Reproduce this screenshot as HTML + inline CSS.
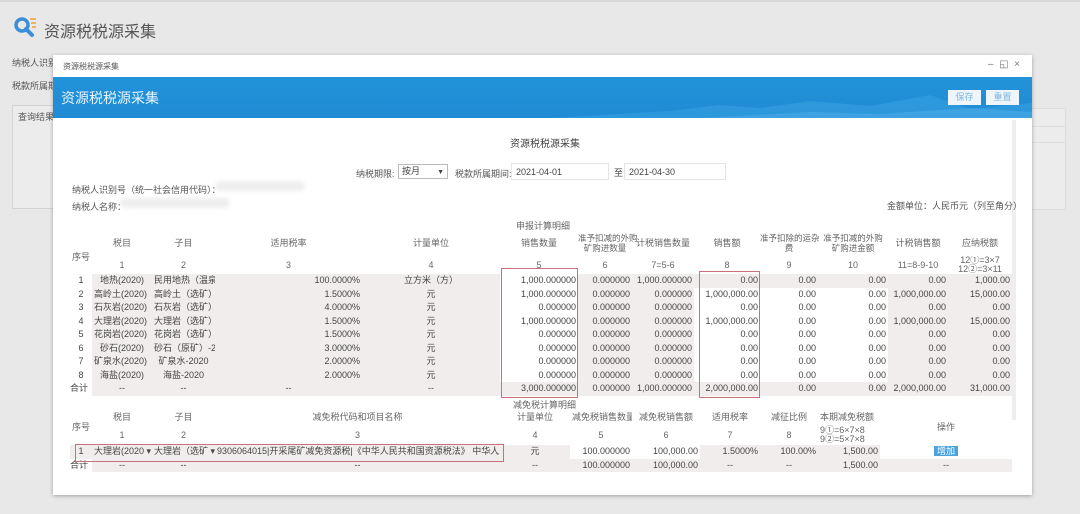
<!DOCTYPE html>
<html><head><meta charset="utf-8"><style>
*{margin:0;padding:0;box-sizing:border-box}
body{width:1080px;height:514px;background:#e8e8e8;font-family:"Liberation Sans","Noto Sans CJK SC",sans-serif;color:#444;position:relative;overflow:hidden;font-size:9px}
.a{position:absolute;white-space:nowrap}
table{border-collapse:collapse;table-layout:fixed;position:absolute}
td{font-size:9px;height:13.5px;line-height:11px;padding:0 2px;white-space:nowrap;overflow:hidden;color:#444}
.r{text-align:right}.c{text-align:center}
tr.g td{background:#f1eded}
td.w{background:#fff!important}
.hd td{color:#666;text-align:center}
td.m{line-height:10px;font-size:8.5px;overflow:visible;padding:0}
</style></head><body>
<div class="a" style="left:0;top:0;width:1080px;height:2px;background:#d8d8d8"></div>
<svg class="a" style="left:13px;top:15px" width="26" height="26" viewBox="0 0 26 26"><circle cx="9" cy="10" r="6" fill="none" stroke="#3a8fd8" stroke-width="3.5"/><path d="M13 14l6 6" stroke="#3a8fd8" stroke-width="4" stroke-linecap="round"/><path d="M17 4h6M18 8h5M19 12h4" stroke="#f0a030" stroke-width="1.6"/></svg>
<div class="a" style="left:44px;top:18px;font-size:16px;color:#555">资源税税源采集</div>
<div class="a" style="left:12px;top:56px;color:#555">纳税人识别</div>
<div class="a" style="left:12px;top:79px;color:#555">税款所属期</div>
<div class="a" style="left:12px;top:105px;width:60px;height:104px;border:1px solid #d4d4d4;background:#ececec"></div>
<div class="a" style="left:18px;top:110px;color:#555">查询结果</div>
<div class="a" style="left:1030px;top:108px;width:36px;height:102px;background:#ececec;border:1px solid #ddd"></div>
<div class="a" style="left:1030px;top:126px;width:36px;height:1px;background:#ddd"></div>
<div class="a" style="left:1030px;top:142px;width:36px;height:1px;background:#ddd"></div>
<div class="a" style="left:53px;top:55px;width:979px;height:440px;background:#fff;box-shadow:0 1px 4px rgba(0,0,0,.3)"></div>
<div class="a" style="left:63px;top:61px;font-size:8px;color:#555">资源税税源采集</div>
<div class="a" style="left:988px;top:59px;font-size:10px;color:#777">–&nbsp;&nbsp;◱&nbsp;&nbsp;×</div>
<div class="a" style="left:53px;top:77px;width:979px;height:41px;background:linear-gradient(180deg,#2293d9,#1f8bd4)"></div>
<svg class="a" style="left:550px;top:77px" width="482" height="41"><path d="M0 41 L120 34 L170 28 L210 31 L260 24 L320 29 L380 18 L420 32 L482 26 L482 41Z" fill="#3aa3e4" opacity=".5"/><path d="M150 41 L260 35 L330 37 L420 31 L482 35 L482 41Z" fill="#5bb4ea" opacity=".4"/></svg>
<div class="a" style="left:61px;top:88px;font-size:14px;color:#e8f4ff">资源税税源采集</div>
<div class="a c" style="left:948px;top:90px;width:33px;height:15px;background:#eef6fc;color:#7fb4dc;font-size:9px;line-height:15px">保存</div>
<div class="a c" style="left:986px;top:90px;width:33px;height:15px;background:#eef6fc;color:#7fb4dc;font-size:9px;line-height:15px">重置</div>
<div class="a" style="left:1012px;top:120px;width:4px;height:300px;background:#eee"></div>
<div class="a" style="left:510px;top:135px;font-size:10px;color:#444">资源税税源采集</div>
<div class="a" style="left:356px;top:167px;color:#555">纳税期限:</div>
<div class="a" style="left:398px;top:164px;width:50px;height:15px;border:1px solid #bbb;font-size:9px;line-height:11px;padding:1px 3px">按月<span style="position:absolute;right:3px;top:2px;font-size:7px">▼</span></div>
<div class="a" style="left:455px;top:167px;color:#555">税款所属期间:</div>
<div class="a" style="left:511px;top:163px;width:98px;height:17px;border:1px solid #e4e4e4;padding:3px 4px;font-size:9px">2021-04-01</div>
<div class="a" style="left:614px;top:166px;font-size:9px">至</div>
<div class="a" style="left:624px;top:163px;width:102px;height:17px;border:1px solid #e4e4e4;padding:3px 4px;font-size:9px">2021-04-30</div>
<div class="a" style="left:72px;top:183px;color:#555">纳税人识别号（统一社会信用代码）：</div>
<div class="a" style="left:215px;top:181px;width:90px;height:10px;background:#eee;border-radius:5px;filter:blur(2px)"></div>
<div class="a" style="left:72px;top:200px;color:#555">纳税人名称：</div>
<div class="a" style="left:120px;top:198px;width:110px;height:10px;background:#eee;border-radius:5px;filter:blur(2px)"></div>
<div class="a" style="left:887px;top:199px;color:#555">金额单位：人民币元（列至角分）</div>
<div class="a" style="left:516px;top:219px;color:#666">申报计算明细</div>
<table style="left:70px;top:230px;width:942px">
<colgroup><col style="width:22px"><col style="width:60px"><col style="width:63px"><col style="width:147px"><col style="width:138px"><col style="width:78px"><col style="width:54px"><col style="width:62px"><col style="width:66px"><col style="width:58px"><col style="width:70px"><col style="width:60px"><col style="width:64px"></colgroup>
<tr class="hd" style="height:26px"><td rowspan="2" style="text-align:left;padding-top:10px">序号</td><td>税目</td><td>子目</td><td>适用税率</td><td>计量单位</td><td>销售数量</td><td class="m">准予扣减的外购<br>矿购进数量</td><td>计税销售数量</td><td>销售额</td><td class="m">准予扣除的运杂<br>费</td><td class="m">准予扣减的外购<br>矿购进金额</td><td>计税销售额</td><td>应纳税额</td></tr>
<tr class="hd" style="height:18px"><td>1</td><td>2</td><td>3</td><td>4</td><td>5</td><td>6</td><td>7=5-6</td><td>8</td><td>9</td><td>10</td><td>11=8-9-10</td><td style="line-height:9px">12①=3×7<br>12②=3×11</td></tr>
<tr class="g"><td class="c w">1</td><td class="c">地热(2020)</td><td>民用地热（温泉）</td><td class="r">100.0000%</td><td class="c">立方米（方）</td><td class="r w">1,000.000000</td><td class="r">0.000000</td><td class="r">1,000.000000</td><td class="r">0.00</td><td class="r">0.00</td><td class="r">0.00</td><td class="r">0.00</td><td class="r">1,000.00</td></tr>
<tr class="g"><td class="c w">2</td><td>高岭土(2020)</td><td>高岭土（选矿）-2</td><td class="r">1.5000%</td><td class="c">元</td><td class="r w">1,000.000000</td><td class="r">0.000000</td><td class="r">0.000000</td><td class="r w">1,000,000.00</td><td class="r w">0.00</td><td class="r w">0.00</td><td class="r">1,000,000.00</td><td class="r">15,000.00</td></tr>
<tr class="g"><td class="c w">3</td><td>石灰岩(2020)</td><td>石灰岩（选矿）-2</td><td class="r">4.0000%</td><td class="c">元</td><td class="r w">0.000000</td><td class="r">0.000000</td><td class="r">0.000000</td><td class="r w">0.00</td><td class="r w">0.00</td><td class="r w">0.00</td><td class="r">0.00</td><td class="r">0.00</td></tr>
<tr class="g"><td class="c w">4</td><td>大理岩(2020)</td><td>大理岩（选矿）-2</td><td class="r">1.5000%</td><td class="c">元</td><td class="r w">1,000.000000</td><td class="r">0.000000</td><td class="r">0.000000</td><td class="r w">1,000,000.00</td><td class="r w">0.00</td><td class="r w">0.00</td><td class="r">1,000,000.00</td><td class="r">15,000.00</td></tr>
<tr class="g"><td class="c w">5</td><td>花岗岩(2020)</td><td>花岗岩（选矿）-2</td><td class="r">1.5000%</td><td class="c">元</td><td class="r w">0.000000</td><td class="r">0.000000</td><td class="r">0.000000</td><td class="r w">0.00</td><td class="r w">0.00</td><td class="r w">0.00</td><td class="r">0.00</td><td class="r">0.00</td></tr>
<tr class="g"><td class="c w">6</td><td class="c">砂石(2020)</td><td>砂石（原矿）-20</td><td class="r">3.0000%</td><td class="c">元</td><td class="r w">0.000000</td><td class="r">0.000000</td><td class="r">0.000000</td><td class="r w">0.00</td><td class="r w">0.00</td><td class="r w">0.00</td><td class="r">0.00</td><td class="r">0.00</td></tr>
<tr class="g"><td class="c w">7</td><td>矿泉水(2020)</td><td class="c">矿泉水-2020</td><td class="r">2.0000%</td><td class="c">元</td><td class="r w">0.000000</td><td class="r">0.000000</td><td class="r">0.000000</td><td class="r w">0.00</td><td class="r w">0.00</td><td class="r w">0.00</td><td class="r">0.00</td><td class="r">0.00</td></tr>
<tr class="g"><td class="c w">8</td><td class="c">海盐(2020)</td><td class="c">海盐-2020</td><td class="r">2.0000%</td><td class="c">元</td><td class="r w">0.000000</td><td class="r">0.000000</td><td class="r">0.000000</td><td class="r w">0.00</td><td class="r w">0.00</td><td class="r w">0.00</td><td class="r">0.00</td><td class="r">0.00</td></tr>
<tr class="g"><td class="w" style="padding:0">合计</td><td class="c">--</td><td class="c">--</td><td class="c">--</td><td class="c">--</td><td class="r">3,000.000000</td><td class="r">0.000000</td><td class="r">1,000.000000</td><td class="r">2,000,000.00</td><td class="r">0.00</td><td class="r">0.00</td><td class="r">2,000,000.00</td><td class="r">31,000.00</td></tr>
</table>
<div class="a" style="left:501px;top:268px;width:77px;height:130px;border:1px solid #c9707a"></div>
<div class="a" style="left:699px;top:271px;width:61px;height:127px;border:1px solid #c9707a"></div>
<div class="a" style="left:513px;top:398px;color:#666">减免税计算明细</div>
<table style="left:70px;top:409px;width:942px">
<colgroup><col style="width:22px"><col style="width:60px"><col style="width:63px"><col style="width:285px"><col style="width:70px"><col style="width:62px"><col style="width:68px"><col style="width:60px"><col style="width:58px"><col style="width:62px"><col style="width:132px"></colgroup>
<tr class="hd" style="height:16px"><td rowspan="2" style="text-align:left">序号</td><td>税目</td><td>子目</td><td>减免税代码和项目名称</td><td>计量单位</td><td>减免税销售数量</td><td>减免税销售额</td><td>适用税率</td><td>减征比例</td><td style="text-align:left">本期减免税额</td><td rowspan="2">操作</td></tr>
<tr class="hd" style="height:20px"><td>1</td><td>2</td><td>3</td><td>4</td><td>5</td><td>6</td><td>7</td><td>8</td><td style="text-align:left;line-height:9px">9①=6×7×8<br>9②=5×7×8</td></tr>
<tr class="g" style="height:13.5px"><td class="c">1</td><td>大理岩(2020 ▾</td><td>大理岩（选矿 ▾</td><td style="padding-right:30px">9306064015|开采尾矿减免资源税|《中华人民共和国资源税法》 中华人</td><td class="c">元</td><td class="r w">100.000000</td><td class="r w">100,000.00</td><td class="r">1.5000%</td><td class="r">100.00%</td><td class="r">1,500.00</td><td class="c w"><span style="background:#4aa3e0;color:#fff;padding:0 3px">增加</span></td></tr>
<tr class="g" style="height:13.5px"><td class="w" style="padding:0">合计</td><td class="c">--</td><td class="c">--</td><td class="c">--</td><td class="c">--</td><td class="r">100.000000</td><td class="r">100,000.00</td><td class="c">--</td><td class="c">--</td><td class="r">1,500.00</td><td class="c">--</td></tr>
</table>
<div class="a" style="left:486px;top:447px;color:#999;font-size:9px">× ⌄</div>
<div class="a" style="left:75px;top:444px;width:429px;height:18px;border:1px solid #c9707a"></div>
</body></html>
